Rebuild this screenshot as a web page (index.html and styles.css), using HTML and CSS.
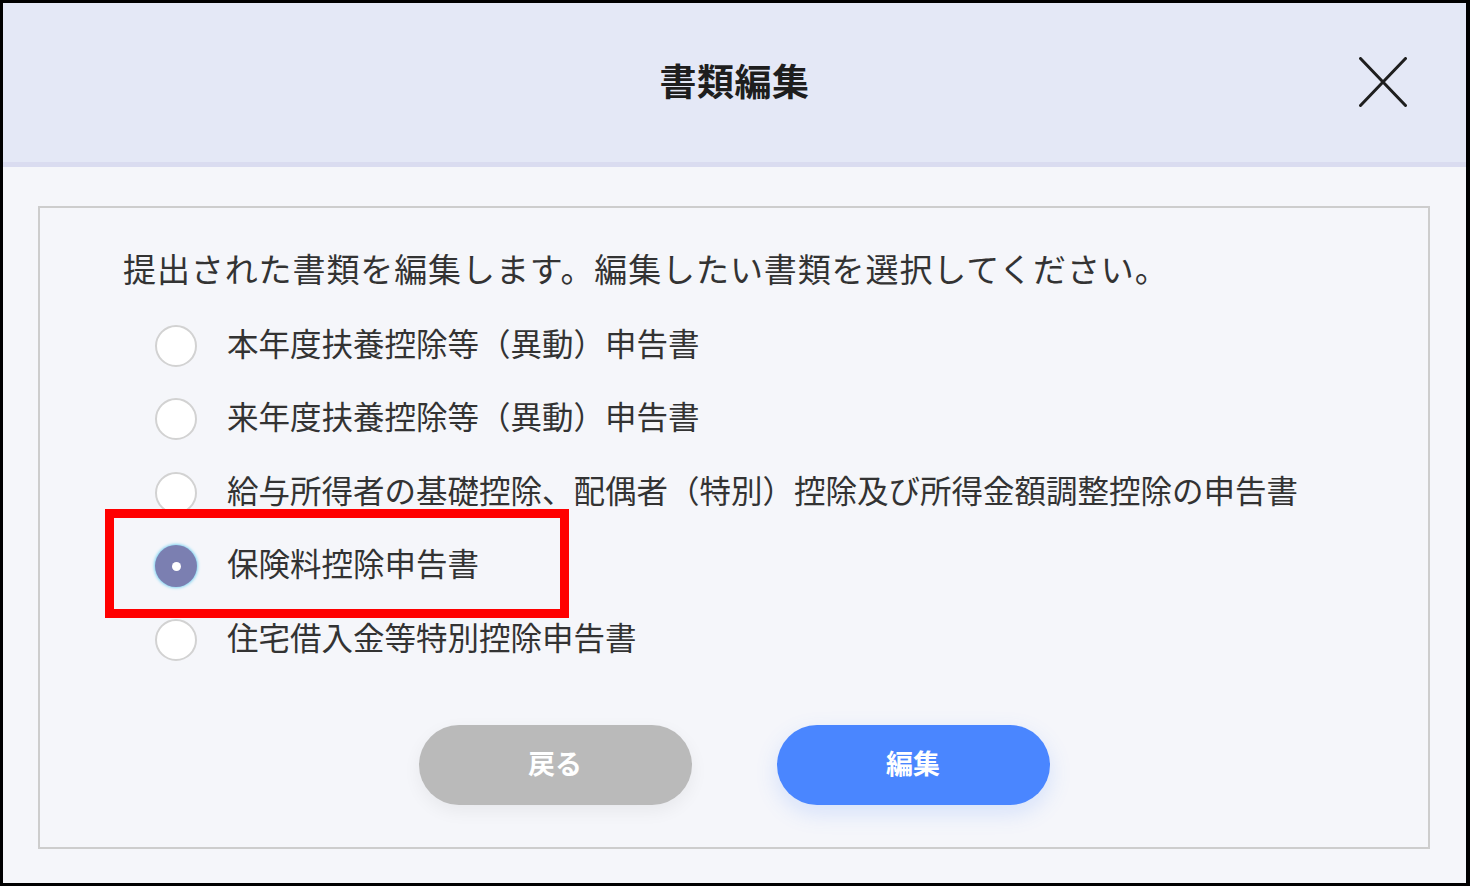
FILE: index.html
```html
<!DOCTYPE html>
<html lang="ja">
<head>
  <meta charset="UTF-8">
  <title>書類編集</title>
  <link rel="stylesheet" href="styles.css">
</head>
<body>

  <div class="dialog">
    <header class="dialog-head">
      <h2>書類編集</h2>
      <button class="close-btn" aria-label="閉じる">
        <svg width="48" height="50" viewBox="0 0 48 50">
          <path d="M1.5 1.5 L46.5 48.5 M46.5 1.5 L1.5 48.5" stroke="#1e1e1e" stroke-width="3" stroke-linecap="round" fill="none"/>
        </svg>
      </button>
    </header>

    <div class="dialog-body">
      <div class="panel">
        <p class="lead">提出された書類を編集します。編集したい書類を選択してください。</p>

        <ul class="doc-list">
          <li class="doc-item"><span class="radio"></span>本年度扶養控除等（異動）申告書</li>
          <li class="doc-item"><span class="radio"></span>来年度扶養控除等（異動）申告書</li>
          <li class="doc-item"><span class="radio"></span>給与所得者の基礎控除、配偶者（特別）控除及び所得金額調整控除の申告書</li>
          <li class="doc-item selected"><span class="radio"></span>保険料控除申告書<span class="mark"></span></li>
          <li class="doc-item"><span class="radio"></span>住宅借入金等特別控除申告書</li>
        </ul>

        <div class="actions">
          <button class="btn btn-back">戻る</button>
          <button class="btn btn-edit">編集</button>
        </div>
      </div>
    </div>
  </div>

</body>
</html>
```

FILE: styles.css
```css
* {
  margin: 0;
  padding: 0;
  box-sizing: border-box;
}

body {
  font-family: "Noto Sans CJK JP", "Noto Sans", sans-serif;
  background: #fff;
  color: #333;
}

.dialog {
  width: 1470px;
  height: 886px;
  border: 3px solid #000;
  border-right-width: 4px;
  background: #f5f6fa;
  display: flex;
  flex-direction: column;
}

/* header */
.dialog-head {
  position: relative;
  height: 164px;
  background: #e4e8f6;
  border-bottom: 5px solid #dadcf0;
  display: flex;
  align-items: center;
  justify-content: center;
}

.dialog-head h2 {
  font-size: 37px;
  font-weight: bold;
  color: #1e1e1e;
  letter-spacing: 0.5px;
  margin-top: -6px;
}

.close-btn {
  position: absolute;
  right: 59px;
  top: 54px;
  width: 48px;
  height: 50px;
  border: none;
  background: none;
  cursor: pointer;
}

.close-btn svg {
  display: block;
}

/* body */
.dialog-body {
  padding: 39px 36px 0 35px;
}

.panel {
  height: 643px;
  border: 2px solid #cdcdcd;
  padding: 38px 0 0 83px;
}

.lead {
  font-size: 33px;
  line-height: 44px;
  height: 44px;
  letter-spacing: 0.9px;
  color: #333;
  white-space: nowrap;
}

.doc-list {
  list-style: none;
  margin-top: 15px;
  padding-left: 32px;
}

.doc-item {
  position: relative;
  display: flex;
  align-items: center;
  gap: 30px;
  height: 73.5px;
  font-size: 31.5px;
  color: #333;
  white-space: nowrap;
}

.radio {
  flex: none;
  width: 42px;
  height: 42px;
  border-radius: 50%;
  background: #fff;
  border: 2px solid #d2d2d2;
  margin-top: 8px;
}

.selected .radio {
  background: #7b7fb1;
  border: none;
  box-shadow: 0 0 3px 1px #7fd3f2;
  display: flex;
  align-items: center;
  justify-content: center;
}

.selected .radio::after {
  content: "";
  width: 9px;
  height: 9px;
  border-radius: 50%;
  background: #fff;
}

/* red annotation frame */
.mark {
  position: absolute;
  left: -50px;
  top: -17px;
  width: 464px;
  height: 109px;
  border: 9px solid #ff0000;
}

/* buttons */
.actions {
  display: flex;
  justify-content: center;
  gap: 85px;
  margin-top: 52px;
  padding-right: 83px;
}

.btn {
  width: 273px;
  height: 80px;
  border: none;
  border-radius: 40px;
  font-family: inherit;
  font-size: 27px;
  font-weight: bold;
  color: #fff;
  padding-bottom: 4px;
  cursor: pointer;
}

.btn-back {
  background: #bababa;
  box-shadow: 0 6px 18px rgba(0, 0, 0, 0.06);
}

.btn-edit {
  background: #4a86ff;
  box-shadow: 0 8px 22px rgba(74, 134, 255, 0.18);
}
```
